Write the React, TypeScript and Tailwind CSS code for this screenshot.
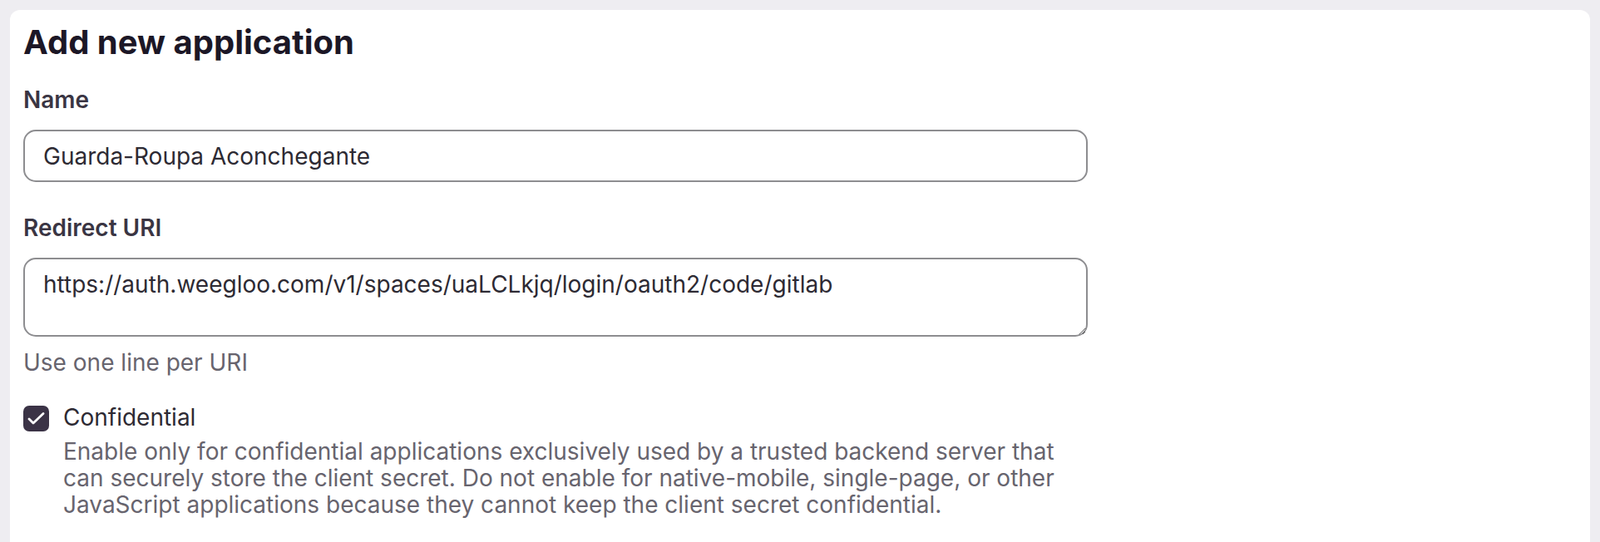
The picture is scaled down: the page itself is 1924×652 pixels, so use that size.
import React from "react";

export default function App() {
  return (
    <main
      className="min-h-screen bg-[#eeedf1] px-3 pt-3"
      style={{ fontFamily: "Inter, 'Noto Sans', sans-serif" }}
    >
      <div className="bg-white rounded-t-xl px-4 pt-4 pb-16 min-h-[660px]">
        <div className="max-w-[1280px]">
          <h1 className="text-[40px] leading-[46px] font-bold text-[#1c1726]">
            Add new application
          </h1>

          {/* Name */}
          <label className="block mt-[28px] text-[28px] leading-[36px] font-semibold text-[#3a3543]">
            Name
          </label>
          <input
            type="text"
            defaultValue="Guarda-Roupa Aconchegante"
            className="mt-[18px] block w-full h-[63px] rounded-[15px] border-2 border-[#8d8d90] px-[22px] text-[28px] text-[#2d2a33] outline-none"
          />

          {/* Redirect URI */}
          <label className="block mt-[37px] text-[28px] leading-[36px] font-semibold text-[#3a3543]">
            Redirect URI
          </label>
          <textarea
            defaultValue="https://auth.weegloo.com/v1/spaces/uaLCLkjq/login/oauth2/code/gitlab"
            className="mt-[18px] block w-full h-[95px] rounded-[15px] border-2 border-[#8d8d90] px-[22px] pt-[10px] text-[28px] leading-[40px] text-[#2d2a33] outline-none"
          />
          <p className="mt-[13px] text-[28px] leading-[36px] text-[#67646e]">
            Use one line per URI
          </p>

          {/* Confidential */}
          <div className="mt-[30px] flex gap-[17px]">
            <div className="mt-1 w-[31px] h-[31px] shrink-0 rounded-[7px] bg-[#3b3346]">
              <svg viewBox="0 0 31 31" className="w-[31px] h-[31px]" fill="none" stroke="white" strokeWidth={2.8} strokeLinecap="round" strokeLinejoin="round">
                <path d="M7 16l5 5L24 9.5" />
              </svg>
            </div>
            <div>
              <div className="text-[28px] leading-[36px] text-[#2d2a33]">Confidential</div>
              <p className="mt-[7px] text-[28px] leading-[32px] text-[#67646e]">
                Enable only for confidential applications exclusively used by a trusted backend server that
                can securely store the client secret. Do not enable for native-mobile, single-page, or other
                JavaScript applications because they cannot keep the client secret confidential.
              </p>
            </div>
          </div>
        </div>
      </div>
    </main>
  );
}
